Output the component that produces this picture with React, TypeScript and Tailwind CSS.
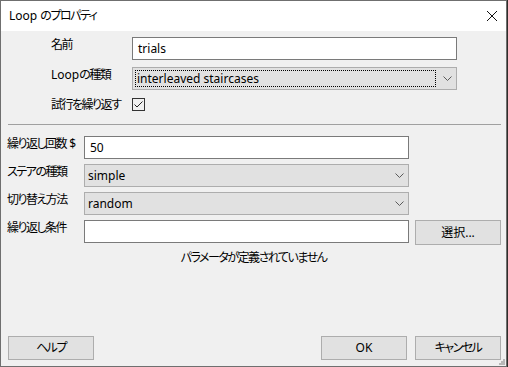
import React from 'react';

const font = "font-['Noto_Sans','Noto_Sans_CJK_JP',sans-serif] [font-feature-settings:'palt'] text-[12px] leading-[16px] text-black";
const jp = 'tracking-[-1.5px]';

function Chevron() {
  return (
    <svg width="9" height="5" viewBox="0 0 9 5" className="shrink-0">
      <path d="M0.5 0.5 L4.5 4.5 L8.5 0.5" fill="none" stroke="#5a5a5a" strokeWidth="1" />
    </svg>
  );
}

function TextBox({ value, pad = 'pl-[5px]' }: { value?: string; pad?: string }) {
  return (
    <div className={`w-[325px] h-[23px] bg-white border border-[#7a7a7a] flex items-center ${pad}`}>
      {value}
    </div>
  );
}

function Combo({ value, focused }: { value: string; focused?: boolean }) {
  return (
    <div className="w-[325px] h-[23px] bg-[#e1e1e1] border border-[#adadad] flex items-center pr-[4px]">
      {focused ? (
        <div className="ml-[2px] flex-1 h-[17px] border border-dotted border-black flex items-center pl-[1px]">
          {value}
        </div>
      ) : (
        <div className="flex-1 pl-[3px]">{value}</div>
      )}
      <div className="w-[16px] flex justify-end">
        <Chevron />
      </div>
    </div>
  );
}

function Button({ label, h = 'h-[24px]', cls = '' }: { label: string; h?: string; cls?: string }) {
  return (
    <div className={`w-[86px] ${h} bg-[#e1e1e1] border border-[#adadad] flex items-center justify-center ${cls}`}>
      {label}
    </div>
  );
}

export default function App() {
  return (
    <div className={`w-[508px] h-[367px] bg-[#2f2d2a] ${font}`}>
      <div className="relative w-[507px] h-[367px] border border-[#6f6f6f] bg-[#f0f0f0] flex flex-col">
        {/* title bar */}
        <div className="h-[30px] bg-white flex items-center justify-between pl-[8px] pr-[9px]">
          <span className="whitespace-nowrap">
            Loop <span className={jp}>のプロパティ</span>
          </span>
          <svg width="10" height="10" viewBox="0 0 10 10">
            <path d="M0 0 L10 10 M10 0 L0 10" stroke="#111" strokeWidth="1" />
          </svg>
        </div>

        {/* top section */}
        <div className="pt-[6px] pl-[50px] flex flex-col gap-[7px]">
          <div className="flex items-start h-[23px]">
            <div className={`w-[81px] whitespace-nowrap ${jp}`}>名前</div>
            <TextBox value="trials" />
          </div>
          <div className="flex items-start h-[23px]">
            <div className="w-[81px] whitespace-nowrap">
              Loop<span className={jp}>の種類</span>
            </div>
            <Combo value="interleaved staircases" focused />
          </div>
          <div className="flex items-start h-[16px]">
            <div className={`w-[81px] whitespace-nowrap ${jp}`}>試行を繰り返す</div>
            <div className="mt-[1px] w-[13px] h-[13px] border border-[#333] bg-[#f0f0f0] flex items-center justify-center">
              <svg width="11" height="11" viewBox="0 0 11 11">
                <path d="M1.5 5.5 L4 8 L9.5 2.5" fill="none" stroke="#222" strokeWidth="1" />
              </svg>
            </div>
          </div>
        </div>

        <div className="mt-[11px] ml-[7px] w-[493px] h-px bg-[#a0a0a0]" />

        {/* lower section */}
        <div className="mt-[11px] pl-[6px] flex flex-col gap-[5px]">
          <div className="flex items-start h-[23px]">
            <div className="w-[77px] whitespace-nowrap">
              <span className={jp}>繰り返し回数</span> $
            </div>
            <TextBox value="50" />
          </div>
          <div className="flex items-start h-[23px]">
            <div className={`w-[77px] whitespace-nowrap ${jp}`}>ステアの種類</div>
            <Combo value="simple" />
          </div>
          <div className="flex items-start h-[23px]">
            <div className={`w-[77px] whitespace-nowrap ${jp}`}>切り替え方法</div>
            <Combo value="random" />
          </div>
          <div className="flex items-start h-[25px]">
            <div className={`w-[77px] whitespace-nowrap ${jp}`}>繰り返し条件</div>
            <TextBox />
            <div className="ml-[6px]">
              <Button label="選択..." h="h-[25px]" />
            </div>
          </div>
        </div>

        <div className={`mt-[5px] text-center ${jp}`}>パラメータが定義されていません</div>

        {/* bottom buttons */}
        <div className="mt-auto pb-[6px] pl-[7px] pr-[5px] flex items-center">
          <Button label="ヘルプ" cls={jp} />
          <div className="flex-1" />
          <Button label="OK" />
          <div className="ml-[8px]">
            <Button label="キャンセル" cls={jp} />
          </div>
        </div>

        {/* resize grip */}
        <svg width="7" height="7" viewBox="0 0 7 7" className="absolute right-[1px] bottom-[1px]">
          <rect x="5" y="1" width="2" height="2" fill="#b8b8b8" />
          <rect x="3" y="3" width="2" height="2" fill="#b8b8b8" />
          <rect x="5" y="3" width="2" height="2" fill="#b8b8b8" />
          <rect x="1" y="5" width="2" height="2" fill="#b8b8b8" />
          <rect x="3" y="5" width="2" height="2" fill="#b8b8b8" />
          <rect x="5" y="5" width="2" height="2" fill="#b8b8b8" />
        </svg>
      </div>
    </div>
  );
}
